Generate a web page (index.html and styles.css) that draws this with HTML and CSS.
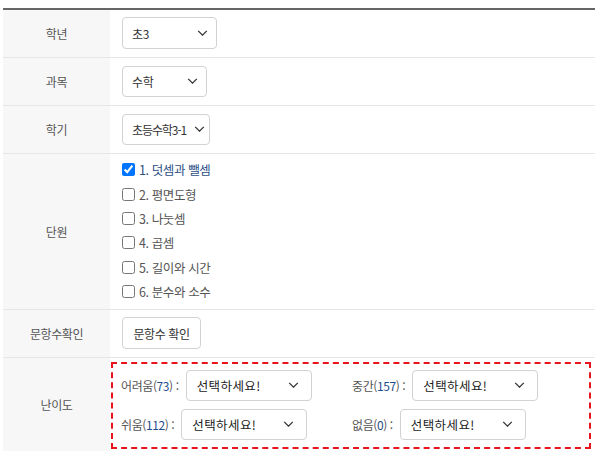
FILE: index.html
```html
<!DOCTYPE html>
<html lang="ko">
<head>
<meta charset="utf-8">
<link rel="stylesheet" href="styles.css">
</head>
<body>
<div class="wrap">
  <table class="form">
    <tr class="r-std">
      <th>학년</th>
      <td><div class="sel sel-grade"><span>초3</span><svg class="chev" viewBox="0 0 12 7"><path d="M1 1l5 5 5-5"/></svg></div></td>
    </tr>
    <tr class="r-std">
      <th>과목</th>
      <td><div class="sel sel-subj"><span>수학</span><svg class="chev" viewBox="0 0 12 7"><path d="M1 1l5 5 5-5"/></svg></div></td>
    </tr>
    <tr class="r-std">
      <th>학기</th>
      <td><div class="sel sel-term"><span>초등수학3-1</span><svg class="chev" viewBox="0 0 12 7"><path d="M1 1l5 5 5-5"/></svg></div></td>
    </tr>
    <tr class="r-unit">
      <th>단원</th>
      <td>
        <ul class="units">
          <li class="on"><input type="checkbox" checked><span>1. 덧셈과 뺄셈</span></li>
          <li><input type="checkbox"><span>2. 평면도형</span></li>
          <li><input type="checkbox"><span>3. 나눗셈</span></li>
          <li><input type="checkbox"><span>4. 곱셈</span></li>
          <li><input type="checkbox"><span>5. 길이와 시간</span></li>
          <li><input type="checkbox"><span>6. 분수와 소수</span></li>
        </ul>
      </td>
    </tr>
    <tr class="r-std">
      <th>문항수확인</th>
      <td><button class="btn">문항수 확인</button></td>
    </tr>
    <tr class="r-diff">
      <th>난이도</th>
      <td>
        <div class="diffbox">
          <div class="dgrid">
            <div class="ditem"><span class="dl">어려움(<em>73</em>) :</span><div class="sel sel-d"><span>선택하세요!</span><svg class="chev" viewBox="0 0 12 7"><path d="M1 1l5 5 5-5"/></svg></div></div>
            <div class="ditem"><span class="dl">중간(<em>157</em>) :</span><div class="sel sel-d"><span>선택하세요!</span><svg class="chev" viewBox="0 0 12 7"><path d="M1 1l5 5 5-5"/></svg></div></div>
            <div class="ditem"><span class="dl">쉬움(<em>112</em>) :</span><div class="sel sel-d"><span>선택하세요!</span><svg class="chev" viewBox="0 0 12 7"><path d="M1 1l5 5 5-5"/></svg></div></div>
            <div class="ditem"><span class="dl">없음(<em>0</em>) :</span><div class="sel sel-d"><span>선택하세요!</span><svg class="chev" viewBox="0 0 12 7"><path d="M1 1l5 5 5-5"/></svg></div></div>
          </div>
        </div>
      </td>
    </tr>
  </table>
</div>
</body>
</html>
```
FILE: styles.css
```css
* { box-sizing: border-box; }
html, body { margin: 0; padding: 0; background: #fff; }
body {
  font-family: "Noto Sans CJK KR", "Noto Sans", sans-serif;
  font-size: 12px;
  color: #555;
  letter-spacing: -0.4px;
}
.wrap { padding: 8px 5px 0 3px; }
.form {
  width: 592px;
  border-collapse: collapse;
  border-top: 2px solid #666;
}
.form th, .form td {
  border-bottom: 1px solid #e6e6e6;
  padding: 0;
  vertical-align: middle;
}
.form th {
  width: 107px;
  background: #f7f7f7;
  font-weight: normal;
  color: #555;
  text-align: center;
}
.form td { padding-left: 12px; }
.r-std th, .r-std td { height: 48px; }

.sel {
  position: relative;
  display: flex;
  align-items: center;
  height: 31px;
  padding-left: 9px;
  border: 1px solid #d2d2d2;
  border-radius: 4px;
  background: #fff;
  color: #333;
}
.sel .chev {
  position: absolute;
  right: 8px;
  top: 50%;
  margin-top: -3px;
  width: 11px;
  height: 6px;
  fill: none;
  stroke: #333;
  stroke-width: 1.5;
}
.sel-grade { width: 95px; height: 32px; }
.sel-subj { width: 85px; }
.sel-term { width: 88px; letter-spacing: -1.1px; }
.sel-term .chev { right: 4px; }

.units { list-style: none; margin: 0; padding: 4px 0 5px; }
.units li { display: flex; align-items: center; height: 24.4px; }
.units input {
  margin: 0 4px 0 0;
  width: 13px;
  height: 13px;
  accent-color: #0075ff;
}
.units li span { font-size: 12.5px; }
.units li.on span { color: #2c4f86; }

.btn {
  height: 32px;
  width: 79px;
  padding: 0;
  border: 1px solid #d2d2d2;
  border-radius: 4px;
  background: #fff;
  font-family: inherit;
  font-size: 12px;
  letter-spacing: -0.4px;
  color: #333;
}

.r-diff td { padding: 4px 4px 2px 1px; }
.diffbox {
  border: 2px dashed #e8141c;
  padding: 6px 6px 7px 8px;
}
.dgrid {
  display: grid;
  grid-template-columns: 231px 1fr;
  row-gap: 8px;
}
.ditem { display: flex; align-items: center; gap: 7px; }
.dl { color: #555; white-space: nowrap; }
.dl em { font-style: normal; color: #1f4e8c; }
.sel-d { width: 126px; padding-left: 10px; color: #222; letter-spacing: 0.4px; font-size: 12.5px; }
.sel-d .chev { right: 12px; }
```
